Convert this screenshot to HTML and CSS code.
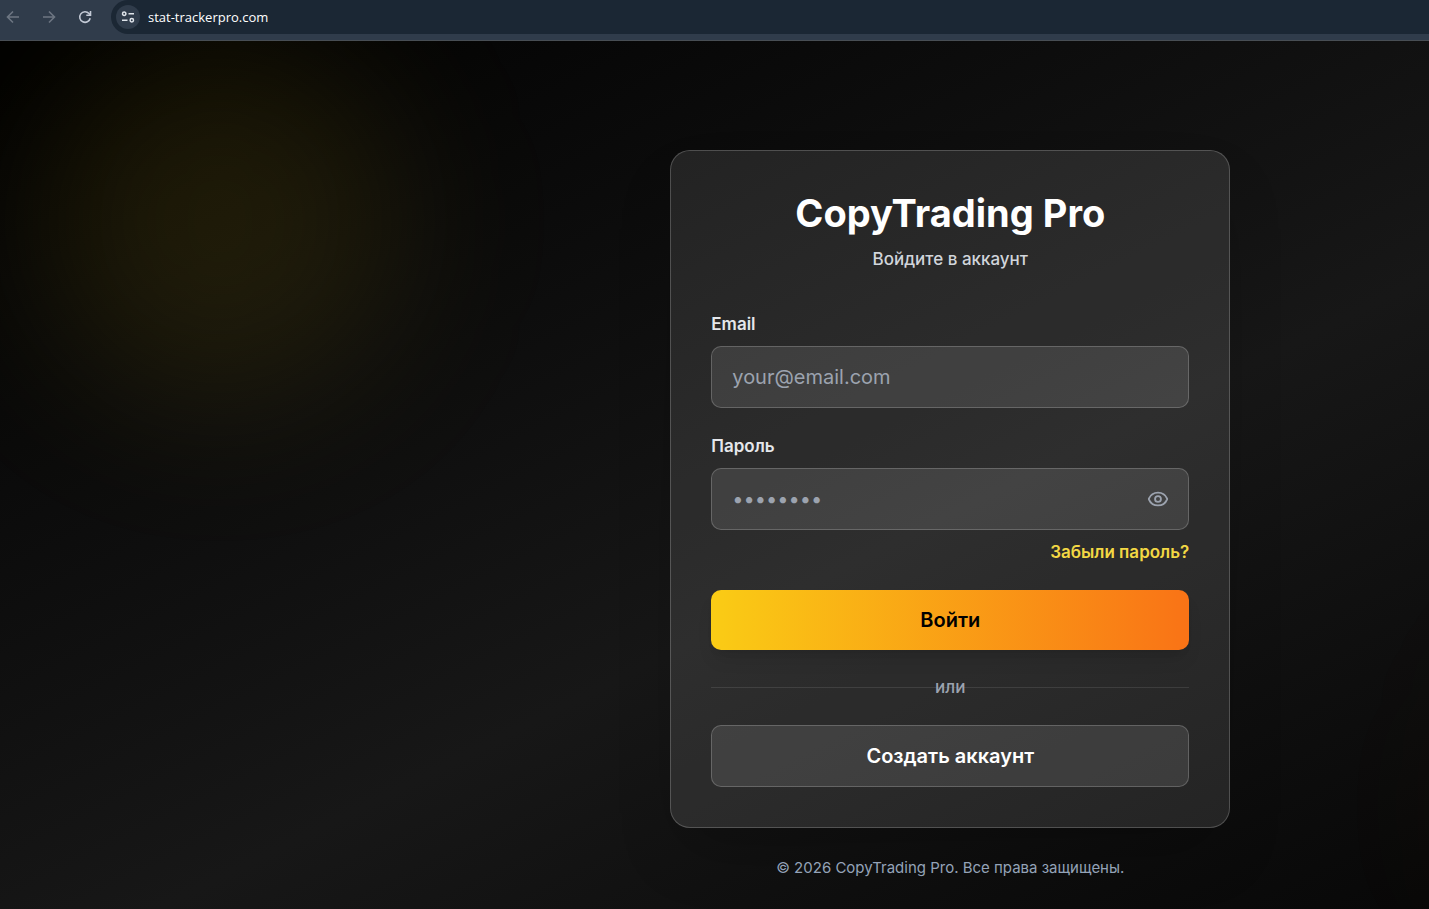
FILE: index.html
```html
<!DOCTYPE html>
<html lang="ru">
<head>
<meta charset="utf-8">
<title>CopyTrading Pro</title>
<link rel="stylesheet" href="styles.css">
</head>
<body>
<header class="toolbar">
  <nav class="nav-buttons" aria-label="Browser">
    <button class="nav-button nav-button-dim" type="button" aria-label="Back">
      <svg viewBox="0 0 16 16"><path d="M14 8H2.5M8 2.5 2.5 8 8 13.500"/></svg>
    </button>
    <button class="nav-button nav-button-dim" type="button" aria-label="Forward">
      <svg viewBox="0 0 16 16"><path d="M2 8h11.500M8 2.500 13.500 8 8 13.500"/></svg>
    </button>
    <button class="nav-button" type="button" aria-label="Reload">
      <svg viewBox="0 0 16 16"><path d="M13.200 9.200A5.300 5.300 0 1 1 12 4.500l1 1.200"/><path d="M13.500 2v4.200H9.300"/></svg>
    </button>
  </nav>
  <div class="address">
    <button class="site-info" type="button" aria-label="Site information">
      <svg viewBox="0 0 14 14"><circle cx="3.200" cy="3.700" r="1.700"/><path d="M7.500 3.700h5.500M1 10.300h5.500"/><circle cx="10.800" cy="10.300" r="1.700"/></svg>
    </button>
    <span class="url">stat-trackerpro.com</span>
  </div>
</header>
<div class="viewport">
  <div class="stage">
    <div class="glow glow-yellow"></div>
    <div class="glow glow-orange"></div>
    <main class="column">
      <section class="card">
        <h1 class="title">CopyTrading Pro</h1>
        <p class="subtitle">Войдите в аккаунт</p>
        <form class="form">
          <div class="field">
            <label class="label" for="email">Email</label>
            <input class="input" id="email" type="email" placeholder="your@email.com">
          </div>
          <div class="field">
            <label class="label" for="password">Пароль</label>
            <div class="password">
              <input class="input input-password" id="password" type="password" placeholder="••••••••">
              <button class="reveal" type="button" aria-label="Показать пароль">
                <svg viewBox="0 0 24 24"><path d="M2.062 12.348a1 1 0 0 1 0-.696 10.750 10.750 0 0 1 19.876 0 1 1 0 0 1 0 .696 10.750 10.750 0 0 1-19.876 0"/><circle cx="12" cy="12" r="3.200"/></svg>
              </button>
            </div>
            <a class="forgot" href="#">Забыли пароль?</a>
          </div>
          <button class="button button-primary" type="submit">Войти</button>
          <div class="divider"><span class="divider-text">или</span></div>
          <button class="button button-secondary" type="button">Создать аккаунт</button>
        </form>
      </section>
      <p class="copyright">© 2026 CopyTrading Pro. Все права защищены.</p>
    </main>
  </div>
</div>
</body>
</html>
```

FILE: styles.css
```css
*,
*::before,
*::after {
  box-sizing: border-box;
}

body {
  margin: 0;
  height: 100vh;
  display: flex;
  flex-direction: column;
  overflow: hidden;
  background: #000;
  color: #fff;
  font-family: Inter, "Noto Sans", sans-serif;
}

h1,
p {
  margin: 0;
}

button,
input {
  font-family: inherit;
}

button {
  padding: 0;
  border: 0;
  background: none;
  color: inherit;
}

svg {
  display: block;
  fill: none;
  stroke: currentColor;
}

.toolbar {
  flex: none;
  display: flex;
  gap: 18px;
  height: 41px;
  padding-bottom: 6px;
  border-bottom: 1px solid #484e54;
  background: #303c4b;
}

.nav-buttons {
  display: flex;
  align-items: center;
  gap: 20px;
  padding-left: 5px;
}

.nav-button {
  width: 16px;
  height: 16px;
  color: #c3cad6;
}

.nav-button-dim {
  color: #6d7682;
}

.nav-button svg {
  width: 16px;
  height: 16px;
  stroke-width: 1.600;
}

.address {
  flex: 1;
  display: flex;
  align-items: center;
  gap: 8px;
  padding-left: 5px;
  border-radius: 17px 0 0 17px;
  background: #1b2734;
}

.site-info {
  display: grid;
  place-items: center;
  width: 24px;
  height: 24px;
  border-radius: 50%;
  background: #303c4b;
  color: #dfe4ea;
}

.site-info svg {
  width: 14px;
  height: 14px;
  stroke-width: 1.500;
}

.url {
  font: 13px/20px "Open Sans", "Noto Sans", sans-serif;
}

.viewport {
  flex: 1;
  min-height: 0;
  overflow: hidden;
}

/* The page canvas runs past the right edge of the window. */
.stage {
  position: relative;
  width: 133vw;
  padding: 109px 20px;
  overflow: hidden;
  background: linear-gradient(to bottom right, #000, #171717, #000);
}

.glow {
  position: absolute;
  width: 360px;
  height: 360px;
  border-radius: 50%;
  filter: blur(80px);
}

.glow-yellow {
  top: 0;
  left: 40px;
  background: rgba(250, 204, 21, 0.1);
}

.glow-orange {
  right: 40px;
  bottom: 0;
  background: rgba(249, 115, 22, 0.1);
}

.column {
  position: relative;
  max-width: 560px;
  margin: 0 auto;
}

.card {
  padding: 40px;
  border: 1px solid rgba(255, 255, 255, 0.2);
  border-radius: 20px;
  background: rgba(255, 255, 255, 0.1);
  box-shadow: 0 32px 64px -16px rgba(0, 0, 0, 0.25);
}

.title {
  font-size: 38px;
  font-weight: 700;
  line-height: 45px;
  text-align: center;
}

.subtitle {
  margin: 10px 0 38px;
  color: #d1d5db;
  font-size: 17px;
  font-weight: 500;
  line-height: 27px;
  text-align: center;
}

.form {
  display: flex;
  flex-direction: column;
  gap: 25px;
}

.field {
  display: flex;
  flex-direction: column;
}

.label {
  margin-bottom: 8px;
  color: #e5e7eb;
  font-size: 17px;
  font-weight: 600;
  line-height: 27px;
}

.input {
  width: 100%;
  height: 62px;
  padding: 0 20px;
  border: 1px solid rgba(255, 255, 255, 0.2);
  border-radius: 10px;
  outline: 0;
  background: rgba(255, 255, 255, 0.1);
  color: #fff;
  font-size: 20px;
}

.input::placeholder {
  color: #9ca3af;
  opacity: 1;
}

.password {
  position: relative;
}

.input-password {
  display: block;
  padding-right: 60px;
}

.reveal {
  position: absolute;
  top: 0;
  right: 20px;
  bottom: 0;
  color: #9ca3af;
}

.reveal svg {
  width: 22px;
  height: 22px;
  stroke-width: 2;
}

.forgot {
  align-self: flex-end;
  margin-top: 10px;
  color: #f3d844;
  font-size: 17px;
  font-weight: 600;
  line-height: 25px;
  text-decoration: none;
}

.button {
  border-radius: 10px;
  font-size: 20px;
  font-weight: 600;
}

.button-primary {
  height: 60px;
  background: linear-gradient(to right, #facc15, #f97316);
  box-shadow: 0 12px 18px -4px rgba(0, 0, 0, 0.1), 0 5px 8px -5px rgba(0, 0, 0, 0.1);
  color: #000;
}

.button-secondary {
  height: 62px;
  border: 1px solid rgba(255, 255, 255, 0.2);
  background: rgba(255, 255, 255, 0.1);
}

.divider {
  display: grid;
  align-items: center;
  justify-items: center;
}

.divider::before {
  content: "";
  grid-area: 1 / 1;
  width: 100%;
  height: 1px;
  background: rgba(255, 255, 255, 0.1);
}

.divider-text {
  grid-area: 1 / 1;
  color: #9ca3af;
  font-size: 17px;
  font-weight: 500;
  line-height: 25px;
}

.copyright {
  margin-top: 30px;
  color: #94a3b8;
  font-size: 15px;
  line-height: 20px;
  text-align: center;
}
```
